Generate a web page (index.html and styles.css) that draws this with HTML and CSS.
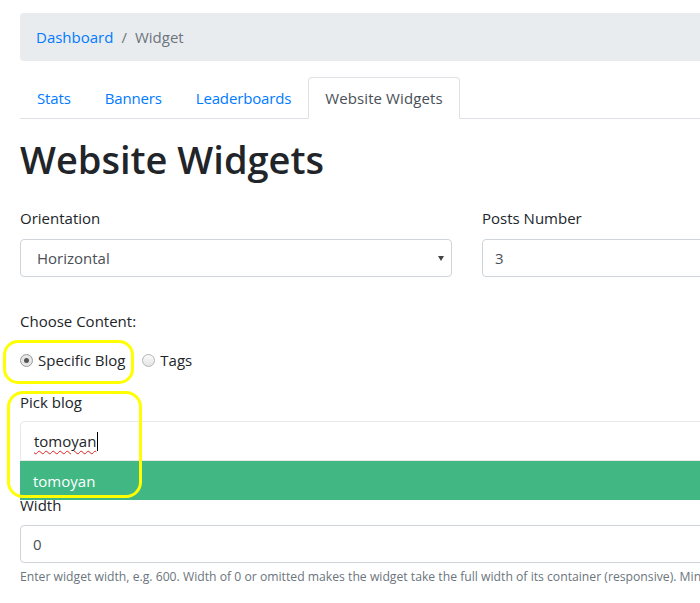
FILE: index.html
```html
<!DOCTYPE html>
<html>
<head>
<meta charset="utf-8">
<link rel="stylesheet" href="styles.css">
</head>
<body>
<div class="page">
  <nav class="breadcrumb">
    <a class="crumb-link" href="#">Dashboard</a>
    <span class="crumb-sep">/</span>
    <span class="crumb-active">Widget</span>
  </nav>

  <ul class="tabs">
    <li class="tab"><a href="#">Stats</a></li>
    <li class="tab"><a href="#">Banners</a></li>
    <li class="tab"><a href="#">Leaderboards</a></li>
    <li class="tab active"><a href="#">Website Widgets</a></li>
  </ul>

  <h1 class="title">Website Widgets</h1>

  <div class="row">
    <div class="col">
      <label class="label">Orientation</label>
      <div class="select">Horizontal<span class="arrow"></span></div>
    </div>
    <div class="col">
      <label class="label">Posts Number</label>
      <div class="input">3</div>
    </div>
  </div>

  <div class="group choose">
    <label class="label">Choose Content:</label>
    <div class="radios">
      <span class="radio checked"></span><span class="radio-text">Specific Blog</span>
      <span class="radio"></span><span class="radio-text">Tags</span>
    </div>
  </div>

  <div class="group pick">
    <label class="label">Pick blog</label>
    <div class="ms">
      <div class="ms-input"><span class="typed">tomoyan</span><span class="caret"></span></div>
      <div class="ms-drop">tomoyan</div>
    </div>
  </div>

  <div class="group width">
    <label class="label">Width</label>
    <div class="input">0</div>
    <small class="help">Enter widget width, e.g. 600. Width of 0 or omitted makes the widget take the full width of its container (responsive). Minimum width is 200.</small>
  </div>

  <div class="hl hl1"></div>
  <div class="hl hl2"></div>
</div>
</body>
</html>
```

FILE: styles.css
```css
html, body {
  margin: 0;
  padding: 0;
  overflow: hidden;
  background: #fff;
}
body {
  font-family: "Open Sans", "Noto Sans", sans-serif;
  font-size: 15px;
  line-height: 24px;
  color: #212529;
}
.page {
  position: relative;
  width: 894px;
  margin-left: 20px;
  padding-top: 13px;
}
a { text-decoration: none; color: #007bff; }

.breadcrumb {
  display: flex;
  align-items: center;
  height: 48px;
  padding: 0 16px;
  background: #e9ecef;
  border-radius: 4px;
  margin-bottom: 16px;
}
.crumb-sep { color: #6c757d; padding: 0 8px; }
.crumb-active { color: #6c757d; }

.tabs {
  list-style: none;
  margin: 0;
  padding: 0;
  display: flex;
  border-bottom: 1px solid #dee2e6;
}
.tab { margin-bottom: -1px; }
.tab a {
  display: block;
  padding: 8px 16px;
  border: 1px solid transparent;
  border-radius: 4px 4px 0 0;
  letter-spacing: -0.15px;
}
.tab.active a {
  color: #495057;
  background: #fff;
  border-color: #dee2e6 #dee2e6 #fff;
  letter-spacing: 0.1px;
}

.title {
  font-size: 38px;
  line-height: 48px;
  font-weight: 600;
  margin: 16px 0 23px;
}

.label { display: block; margin-bottom: 9px; }

.row { display: flex; gap: 30px; }
.col { flex: 1; }

.select, .input {
  box-sizing: border-box;
  height: 38px;
  border: 1px solid #ced4da;
  border-radius: 4px;
  display: flex;
  align-items: center;
  color: #495057;
}
.select { position: relative; padding-left: 16px; }
.input { padding-left: 12px; }
.arrow {
  position: absolute;
  right: 7px;
  top: 16px;
  width: 0;
  height: 0;
  border-left: 3.5px solid transparent;
  border-right: 3.5px solid transparent;
  border-top: 5px solid #444;
}

.choose { margin-top: 32px; }
.choose .label { margin-bottom: 15px; }
.radios { display: flex; align-items: center; height: 24px; }
.radio {
  box-sizing: border-box;
  width: 13px;
  height: 13px;
  border-radius: 50%;
  border: 1px solid #b5b5b5;
  background: linear-gradient(#fafafa, #e4e4e4);
  margin-right: 5px;
  position: relative;
}
.radio.checked { background: #e6e6e6; border-color: #9a9a9a; }
.radio.checked::after {
  content: "";
  position: absolute;
  left: 3px; top: 3px;
  width: 5px; height: 5px;
  border-radius: 50%;
  background: #555;
}
.radio-text { margin-right: 17px; }

.pick { margin-top: 18px; }
.pick .label { margin-bottom: 7px; }
.ms { position: relative; }
.ms-input {
  box-sizing: border-box;
  height: 40px;
  border: 1px solid #e8e8e8;
  border-radius: 5px 5px 0 0;
  padding-left: 13px;
  display: flex;
  align-items: center;
}
.typed {
  text-decoration: underline wavy #e02020;
  text-decoration-thickness: 1px;
  text-underline-offset: 3px;
}
.caret {
  display: inline-block;
  width: 1px;
  height: 19px;
  background: #000;
  margin-left: 1px;
}
.ms-drop {
  position: absolute;
  left: 0; right: 0;
  top: 100%;
  height: 39px;
  background: #41b883;
  color: #fff;
  padding-left: 13px;
  display: flex;
  align-items: center;
  z-index: 2;
}

.width { margin-top: 32px; }
.width .label { margin-bottom: 8px; }
.help {
  display: block;
  margin-top: 4px;
  font-size: 12.2px;
  line-height: 19px;
  color: #6c757d;
  white-space: nowrap;
}

.hl {
  position: absolute;
  border: 3px solid #ffff00;
  z-index: 5;
  box-sizing: border-box;
}
.hl1 { left: -17px; top: 340px; width: 131px; height: 44px; border-radius: 15px; }
.hl2 { left: -13px; top: 391px; width: 135px; height: 107px; border-radius: 16px; }
```
